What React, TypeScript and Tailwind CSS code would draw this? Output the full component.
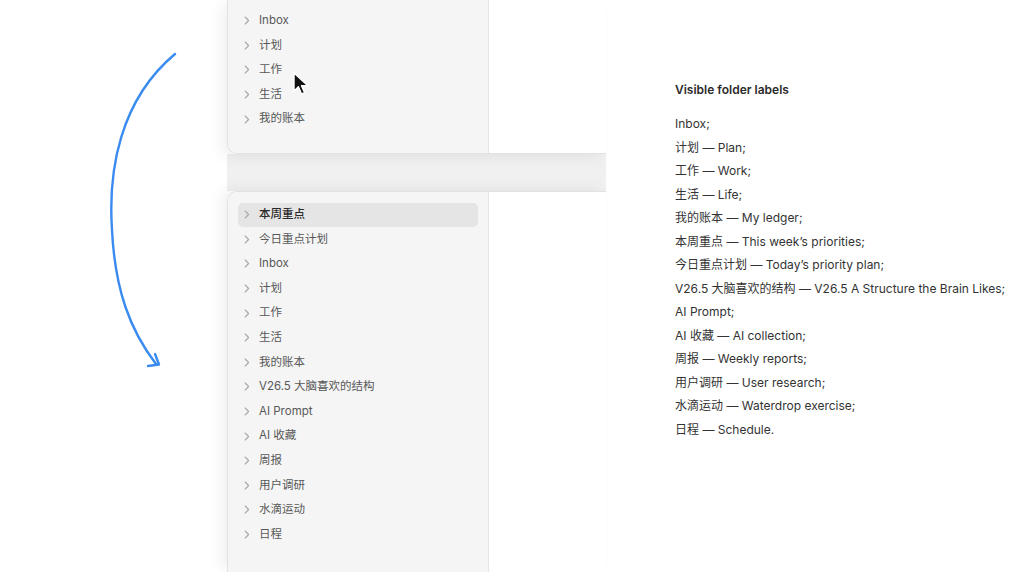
import React from "react";

const font = { fontFamily: 'Inter, "Noto Sans CJK SC", "Noto Sans", sans-serif' };

const topItems = ["Inbox", "计划", "工作", "生活", "我的账本"];
const bottomItems = [
  "本周重点",
  "今日重点计划",
  "Inbox",
  "计划",
  "工作",
  "生活",
  "我的账本",
  "V26.5 大脑喜欢的结构",
  "AI Prompt",
  "AI 收藏",
  "周报",
  "用户调研",
  "水滴运动",
  "日程",
];

const labels = [
  "Inbox;",
  "计划 — Plan;",
  "工作 — Work;",
  "生活 — Life;",
  "我的账本 — My ledger;",
  "本周重点 — This week’s priorities;",
  "今日重点计划 — Today’s priority plan;",
  "V26.5 大脑喜欢的结构 — V26.5 A Structure the Brain Likes;",
  "AI Prompt;",
  "AI 收藏 — AI collection;",
  "周报 — Weekly reports;",
  "用户调研 — User research;",
  "水滴运动 — Waterdrop exercise;",
  "日程 — Schedule.",
];

function Chevron() {
  return (
    <svg width="6" height="9" viewBox="0 0 6 9" className="shrink-0">
      <path d="M1.2 1 L4.6 4.5 L1.2 8" fill="none" stroke="#a8a8a8" strokeWidth="1.1" strokeLinecap="round" strokeLinejoin="round" />
    </svg>
  );
}

function Row({ label, active }: { label: string; active?: boolean }) {
  return (
    <div
      className={`flex h-[24.6px] items-center gap-[9px] rounded-[5px] pl-[6px] text-[11.5px] ${
        active ? "bg-[#e5e5e5] font-medium text-[#2a2a2a]" : "text-[#585858]"
      }`}
    >
      <Chevron />
      <span className="leading-none">{label}</span>
    </div>
  );
}

function Cursor() {
  return (
    <svg width="18" height="26" viewBox="0 0 18 26" className="absolute left-[64px] top-[71px]">
      <path
        d="M2 2 L2 20 L6.4 15.8 L9.6 23 L12.6 21.7 L9.5 14.6 L15.6 14.6 Z"
        fill="#111"
        stroke="#fff"
        strokeWidth="1.4"
        strokeLinejoin="round"
      />
    </svg>
  );
}

export default function App() {
  return (
    <div className="flex h-[572px] w-[1024px] overflow-hidden bg-white" style={font}>
      {/* curved arrow pointing from the small list down to the full list */}
      <div className="w-[227px] shrink-0">
        <svg width="227" height="572" viewBox="0 0 227 572">
          <path
            d="M175 54 C 120 100 108 170 112 230 C 115 290 130 330 156 364"
            fill="none"
            stroke="#3a8bf0"
            strokeWidth="2.4"
            strokeLinecap="round"
          />
          <path
            d="M148 366 L159 364.5 L155 354"
            fill="none"
            stroke="#3a8bf0"
            strokeWidth="2.4"
            strokeLinecap="round"
            strokeLinejoin="round"
          />
        </svg>
      </div>

      {/* stacked app windows */}
      <div className="flex w-[379px] shrink-0 flex-col">
        <div className="relative flex h-[154px] shrink-0 overflow-hidden rounded-bl-[10px] border-b border-l border-[#e2e2e2] bg-white shadow-[-6px_4px_14px_rgba(0,0,0,0.06)]">
          <div className="flex w-[261px] shrink-0 flex-col border-r border-[#e6e6e6] bg-[#f5f5f5] px-[10px] pt-[8.5px]">
            {topItems.map((t) => (
              <Row key={t} label={t} />
            ))}
            <Cursor />
          </div>
          <div className="flex-1 bg-white" />
        </div>

        <div className="h-[37px] shrink-0 bg-[#f0f0f0]" />

        <div className="flex flex-1 overflow-hidden rounded-tl-[10px] border-l border-t border-[#e2e2e2] bg-white shadow-[-6px_-2px_14px_rgba(0,0,0,0.06)]">
          <div className="flex w-[261px] shrink-0 flex-col border-r border-[#e6e6e6] bg-[#f5f5f5] px-[10px] pt-[10.5px]">
            {bottomItems.map((t, i) => (
              <Row key={t + i} label={t} active={i === 0} />
            ))}
          </div>
          <div className="flex-1 bg-white" />
        </div>
      </div>

      {/* translated labels */}
      <div className="flex flex-1 flex-col pl-[69px] pt-[82px] text-[#333]">
        <div className="text-[12px] font-semibold leading-[16px] text-[#2b2b2b]">Visible folder labels</div>
        <div className="mt-[18px] flex flex-col">
          {labels.map((l) => (
            <div key={l} className="h-[23.5px] text-[12px] leading-[16px]">
              {l}
            </div>
          ))}
        </div>
      </div>
    </div>
  );
}
